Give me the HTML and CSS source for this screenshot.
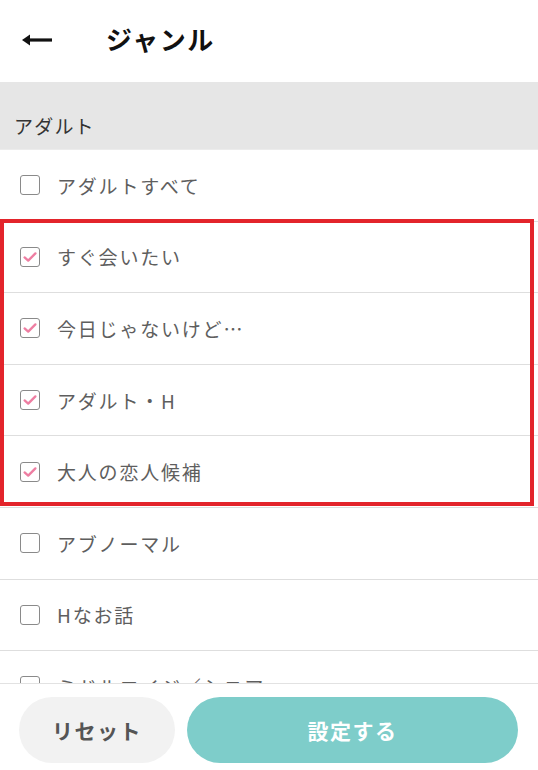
FILE: index.html
```html
<!DOCTYPE html>
<html lang="ja">
<head>
<meta charset="utf-8">
<link rel="stylesheet" href="styles.css">
</head>
<body>
<div class="app">
  <header class="header">
    <svg class="back" width="32" height="20" viewBox="0 0 32 20"><path d="M4 10 H31" stroke="#111" stroke-width="3.2"/><path d="M1 10 L9 4.5 L9 15.5 Z" fill="#111"/></svg>
    <h1 class="title">ジャンル</h1>
  </header>
  <main class="list">
    <div class="section">アダルト</div>
    <div class="row"><span class="box"></span><span class="label">アダルトすべて</span></div>
    <div class="row"><span class="box checked"><svg viewBox="0 0 20 20"><path d="M4 10.5 L8 14 L16 6" fill="none" stroke="#ee7ea2" stroke-width="2.6" stroke-linecap="round" stroke-linejoin="round"/></svg></span><span class="label">すぐ会いたい</span></div>
    <div class="row"><span class="box checked"><svg viewBox="0 0 20 20"><path d="M4 10.5 L8 14 L16 6" fill="none" stroke="#ee7ea2" stroke-width="2.6" stroke-linecap="round" stroke-linejoin="round"/></svg></span><span class="label">今日じゃないけど…</span></div>
    <div class="row"><span class="box checked"><svg viewBox="0 0 20 20"><path d="M4 10.5 L8 14 L16 6" fill="none" stroke="#ee7ea2" stroke-width="2.6" stroke-linecap="round" stroke-linejoin="round"/></svg></span><span class="label">アダルト・H</span></div>
    <div class="row"><span class="box checked"><svg viewBox="0 0 20 20"><path d="M4 10.5 L8 14 L16 6" fill="none" stroke="#ee7ea2" stroke-width="2.6" stroke-linecap="round" stroke-linejoin="round"/></svg></span><span class="label">大人の恋人候補</span></div>
    <div class="row"><span class="box"></span><span class="label">アブノーマル</span></div>
    <div class="row"><span class="box"></span><span class="label">Hなお話</span></div>
    <div class="row"><span class="box"></span><span class="label">ミドルエイジ／シニア</span></div>
    <div class="highlight"></div>
  </main>
  <footer class="footer">
    <button class="btn reset">リセット</button>
    <button class="btn submit">設定する</button>
  </footer>
</div>
</body>
</html>
```
FILE: styles.css
```css
* { box-sizing: border-box; }
html, body { margin: 0; padding: 0; background: #fff; }
body {
  font-family: "Noto Sans CJK JP", "Noto Sans", sans-serif;
  color: #555;
}
.app {
  width: 538px;
  height: 770px;
  display: flex;
  flex-direction: column;
  overflow: hidden;
}
.header {
  height: 82px;
  flex: none;
  display: flex;
  align-items: center;
  padding-left: 21px;
}
.back { display: block; margin-top: -2px; }
.title {
  margin: 0 0 0 53px;
  font-size: 26px;
  font-weight: 700;
  letter-spacing: 1.5px;
  color: #111;
  line-height: 1;
  margin-top: -4px;
}
.list {
  flex: 1;
  position: relative;
  overflow: hidden;
}
.section {
  height: 68px;
  background: #e6e6e6;
  display: flex;
  align-items: flex-end;
  padding: 0 0 10px 14px;
  font-size: 19px;
  letter-spacing: 1.2px;
  color: #333;
  border-bottom: 1px solid #ececec;
}
.row {
  height: 71.6px;
  display: flex;
  align-items: center;
  padding-left: 20px;
  border-bottom: 1px solid #dedede;
}
.box {
  width: 20px;
  height: 20px;
  border: 1.6px solid #8a8a8a;
  border-radius: 3px;
  flex: none;
  display: flex;
  align-items: center;
  justify-content: center;
}
.box svg { width: 18px; height: 18px; display: block; }
.label {
  margin-left: 17px;
  font-size: 19px;
  letter-spacing: 1.8px;
  color: #5e5e5e;
  line-height: 1;
}
.highlight {
  position: absolute;
  left: 0;
  top: 137px;
  width: 534px;
  height: 287px;
  border: 4.5px solid #e3242b;
  pointer-events: none;
}
.footer {
  height: 87px;
  flex: none;
  border-top: 1px solid #e2e2e2;
  display: flex;
  gap: 12px;
  padding: 13px 20px 0 19px;
  background: #fff;
}
.btn {
  height: 66px;
  border: none;
  border-radius: 33px;
  font-family: "Noto Sans CJK JP", sans-serif;
  font-size: 21px;
  font-weight: 700;
  letter-spacing: 1.5px;
}
.reset {
  width: 156px;
  background: #f2f2f2;
  color: #555;
}
.submit {
  flex: 1;
  background: #7ecdca;
  color: #fff;
}
```
